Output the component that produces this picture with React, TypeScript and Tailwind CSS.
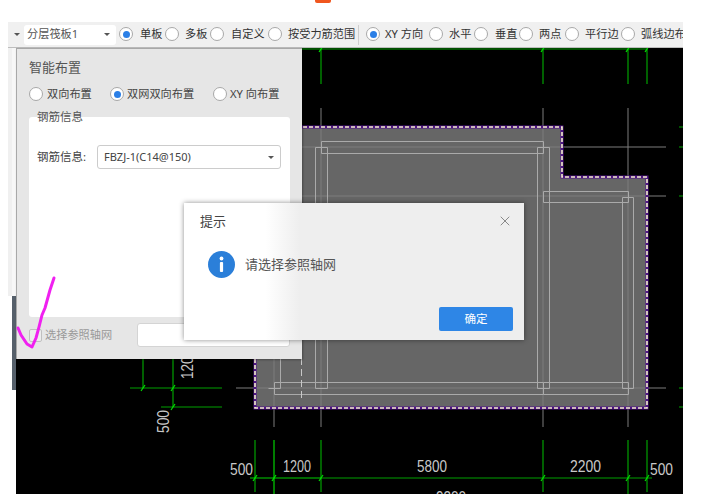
import { X } from 'lucide-react';

const cjk = "font-['Noto_Sans','Noto_Sans_CJK_SC',sans-serif]";

const Radio = ({ checked = false }: Readonly<{ checked?: boolean }>) => (
  <span className="flex size-[14px] shrink-0 items-center justify-center rounded-full border border-[#a8a8a8] bg-white">
    {checked ? <span className="size-[7px] rounded-full bg-[#2b7fe6]" /> : null}
  </span>
);

const Caret = () => (
  <span className="h-0 w-0 border-x-[3px] border-t-[3px] border-x-transparent border-t-[#555]" />
);

const toolbarLeft = [
  { label: '单板', width: 'w-[46px]', gap: 'gap-[7px]', checked: true },
  { label: '多板', width: 'w-[45px]', gap: 'gap-[6px]' },
  { label: '自定义', width: 'w-[58px]', gap: 'gap-[7px]' },
  { label: '按受力筋范围', width: 'w-[90px]', gap: 'gap-[6px]' },
];

const toolbarRight = [
  { label: 'XY 方向', width: 'w-[63px]', gap: 'gap-[5px]', checked: true },
  { label: '水平', width: 'w-[45px]', gap: 'gap-[6px]' },
  { label: '垂直', width: 'w-[45px]', gap: 'gap-[7px]' },
  { label: '两点', width: 'w-[46px]', gap: 'gap-[6px]' },
  { label: '平行边', width: 'w-[56px]', gap: 'gap-[6px]' },
  { label: '弧线边布置', width: 'w-[62px]', gap: 'gap-[6px]' },
];

const ToolbarRadio = ({
  checked,
  gap,
  label,
  width,
}: Readonly<{ checked?: boolean; gap: string; label: string; width: string }>) => (
  <div className={`flex shrink-0 items-center overflow-hidden whitespace-nowrap ${gap} ${width}`}>
    <Radio checked={checked} />
    <span>{label}</span>
  </div>
);

const Toolbar = () => (
  <div className="flex h-[26px] items-center overflow-hidden border-b border-[#bdbdbd] bg-[#f0f0f0] text-[11.2px] text-[#333]">
    <div className="flex w-[16px] shrink-0 justify-center pl-[2px]">
      <Caret />
    </div>
    <div className="flex h-[20px] w-[92px] shrink-0 items-center justify-between rounded-[3px] bg-white pr-[6px] pl-[3px] text-[#555]">
      <span>分层筏板1</span>
      <Caret />
    </div>
    <div className="w-[3px] shrink-0" />
    {toolbarLeft.map((item) => (
      <ToolbarRadio key={item.label} {...item} />
    ))}
    <div className="mr-[7px] h-[20px] w-px shrink-0 bg-[#cfcfcf]" />
    {toolbarRight.map((item) => (
      <ToolbarRadio key={item.label} {...item} />
    ))}
  </div>
);

const dimText = [
  { x: 230, y: 475, w: 23, t: '500' },
  { x: 283, y: 472, w: 28, t: '1200' },
  { x: 417, y: 472, w: 30, t: '5800' },
  { x: 570, y: 472, w: 31, t: '2200' },
  { x: 650, y: 475, w: 23, t: '500' },
  { x: 436, y: 503, w: 30, t: '9200' },
];

const greenTicks: Array<[number, number]> = [
  [321, 49], [543, 49], [628, 49], [647, 49],
  [255, 478], [274, 478], [321, 478], [543, 478], [628, 478], [647, 478],
  [143, 388], [173, 388], [173, 407],
];

// drawing coordinates are the screenshot's own, see viewBox
const CadCanvas = () => (
  <svg className="block h-full w-full" viewBox="16 48 667 446" fill="none">
    <rect x="16" y="48" width="667" height="446" fill="#000" />

    <path d="M255 127H562V177H647V408H255Z" fill="#666" />

    <g stroke="#7c7c7c" strokeWidth="1">
      <path d="M321 108V427M543 108V427M628 108V427M274 300V427" />
      <path d="M236 388H666M302 147H666M302 196H666" />
    </g>

    <g stroke="#aaa" strokeWidth="1">
      <path d="M321.5 141.5H543.5V153.5H321.5Z" />
      <path d="M315.5 147.5H327.5V388.5H315.5Z" />
      <path d="M537.5 147.5H549.5V388.5H537.5Z" />
      <path d="M543.5 191.5H628.5V202.5H543.5Z" />
      <path d="M622.5 197.5H633.5V388.5H622.5Z" />
      <path d="M268.5 300H280.5V388.5H268.5" />
      <path d="M274.5 382.5H543.5V394.5H274.5Z" />
      <path d="M543.5 382.5H628.5V394.5H543.5" />
    </g>
    <path d="M301.5 358V400" stroke="#c8c8c8" strokeDasharray="7 4" />

    <path d="M255 127H562V177H647V408H255Z" stroke="#4f1486" strokeWidth="3" />
    <path d="M255 127H562V177H647V408H255Z" stroke="#f6f0cc" strokeWidth="1.6" strokeDasharray="4 2" />

    <g stroke="#00a000" strokeWidth="1.2">
      <path d="M301 49H647M321 49V84M543 49V84M628 49V84M647 49V84" />
      <path d="M321 440V492M543 440V492M628 440V494M647 440V492M255 440V492" />
      <path d="M321 478H652" />
      <path d="M130 388H222M161 407H222M143 358V388M173 358V407" />
      <path d="M679 127H683M679 147H683M679 196H683M679 388H683M679 407H683" />
    </g>
    <path d="M250 478H321M274 440V494" stroke="#00d000" strokeWidth="1.2" />
    {greenTicks.map(([x, y]) => (
      <path key={`${x}-${y}`} d={`M${x - 2} ${y + 3}L${x + 2} ${y - 3}`} stroke="#00e000" strokeWidth="1.2" />
    ))}

    <g fill="#c8c8c8" fontFamily="'Liberation Sans', sans-serif" fontSize="16">
      {dimText.map((item) => (
        <text key={item.x} x={item.x} y={item.y} textLength={item.w} lengthAdjust="spacingAndGlyphs">
          {item.t}
        </text>
      ))}
      <text transform="translate(193 379) rotate(-90)" textLength={30} lengthAdjust="spacingAndGlyphs">
        1200
      </text>
      <text transform="translate(169 433) rotate(-90)" textLength={23} lengthAdjust="spacingAndGlyphs">
        500
      </text>
    </g>
  </svg>
);

const SmartLayoutPanel = () => (
  <div className="absolute top-[48px] left-[16px] flex h-[311px] w-[286px] flex-col border-t border-l border-[#a8a8a8] bg-[#e6e6e6] px-[12px] text-[11.2px] text-[#444] shadow-[1px_1px_2px_rgba(0,0,0,0.3)]">
    <div className="mt-[9px] h-[18px] text-[13px] leading-[18px] text-[#555]">智能布置</div>
    <div className="mt-[10px] flex h-[16px] items-center">
      <div className="flex w-[81px] items-center gap-[4px]">
        <Radio />
        <span className="whitespace-nowrap">双向布置</span>
      </div>
      <div className="flex w-[103px] items-center gap-[3px]">
        <Radio checked />
        <span className="whitespace-nowrap">双网双向布置</span>
      </div>
      <div className="flex items-center gap-[3px]">
        <Radio />
        <span className="whitespace-nowrap">XY 向布置</span>
      </div>
    </div>
    <div className="mt-[15px] flex h-[200px] w-[261px] flex-col rounded-[3px] bg-white px-[8px]">
      <div className="-mt-[8px] h-[16px] text-[11.5px] leading-[16px] text-[#555]">钢筋信息</div>
      <div className="mt-[20px] flex items-center">
        <span className="w-[60px] text-[11.5px] whitespace-nowrap">钢筋信息:</span>
        <div className="flex h-[24px] w-[184px] items-center justify-between rounded-[3px] border border-[#ccc] bg-white pr-[6px] pl-[6px] text-[11px]">
          <span>FBZJ-1(C14@150)</span>
          <Caret />
        </div>
      </div>
    </div>
    <div className="mt-[6px] flex h-[24px] items-center">
      <span className="size-[13px] shrink-0 rounded-[2px] border border-[#c0c0c0] bg-[#ececec]" />
      <span className="ml-[3px] w-[92px] whitespace-nowrap text-[#999]">选择参照轴网</span>
      <div className="h-[24px] w-[153px] rounded-[3px] border border-[#d4d4d4] bg-white" />
    </div>
  </div>
);

const PromptDialog = () => (
  <div className="absolute top-[203px] left-[184px] flex h-[137px] w-[340px] flex-col bg-[linear-gradient(90deg,#fff_0,#fff_24%,#eee_34%)] shadow-[0_0_5px_rgba(0,0,0,0.45)]">
    <div className="flex items-center justify-between pt-[8px] pr-[11px] pl-[16px]">
      <span className="text-[13px] leading-[20px] text-[#444]">提示</span>
      <X className="size-[16px] text-[#808080]" strokeWidth={1.4} />
    </div>
    <div className="mt-[20px] flex items-center gap-[10px] pl-[24px]">
      <svg className="size-[27px]" viewBox="0 0 27 27">
        <circle cx="13.5" cy="13.5" r="13.5" fill="#2b7fd9" />
        <circle cx="13.5" cy="7.5" r="1.9" fill="#fff" />
        <rect x="11.9" y="11" width="3.2" height="10" rx="1" fill="#fff" />
      </svg>
      <span className="text-[13px] text-[#555]">请选择参照轴网</span>
    </div>
    <div className="mt-auto flex justify-end pr-[11px] pb-[9px]">
      <button className="h-[24px] w-[74px] rounded-[2px] bg-[#2e86e6] text-[11.5px] text-white">确定</button>
    </div>
  </div>
);

const App = () => (
  <div className={`relative h-[494px] w-[718px] overflow-hidden bg-white ${cjk}`}>
    <div className="flex h-[22px] justify-start pl-[315px]">
      <div className="h-[3px] w-[16px] rounded-b-[2px] bg-[#f0561e]" />
    </div>
    <div className="ml-[8px] flex h-[472px] w-[675px] flex-col">
      <Toolbar />
      <div className="flex min-h-0 flex-1">
        <div className="flex w-[8px] shrink-0 flex-col">
          <div className="h-[248px] border-r-4 border-[#f7f7f7] bg-[#f0f0f0]" />
          <div className="ml-[4px] h-[94px] bg-[#56606b]" />
        </div>
        <div className="min-w-0 flex-1">
          <CadCanvas />
        </div>
      </div>
    </div>

    <SmartLayoutPanel />
    <PromptDialog />

    <svg className="pointer-events-none absolute top-0 left-0" width="718" height="494" fill="none">
      <path
        d="M54 278L50 290L45 308L42 315L39 327L36 338L32 347L27 344L21 335L18 328"
        stroke="#f020f0"
        strokeWidth="3"
        strokeLinecap="round"
        strokeLinejoin="round"
      />
    </svg>
  </div>
);

export default App;
